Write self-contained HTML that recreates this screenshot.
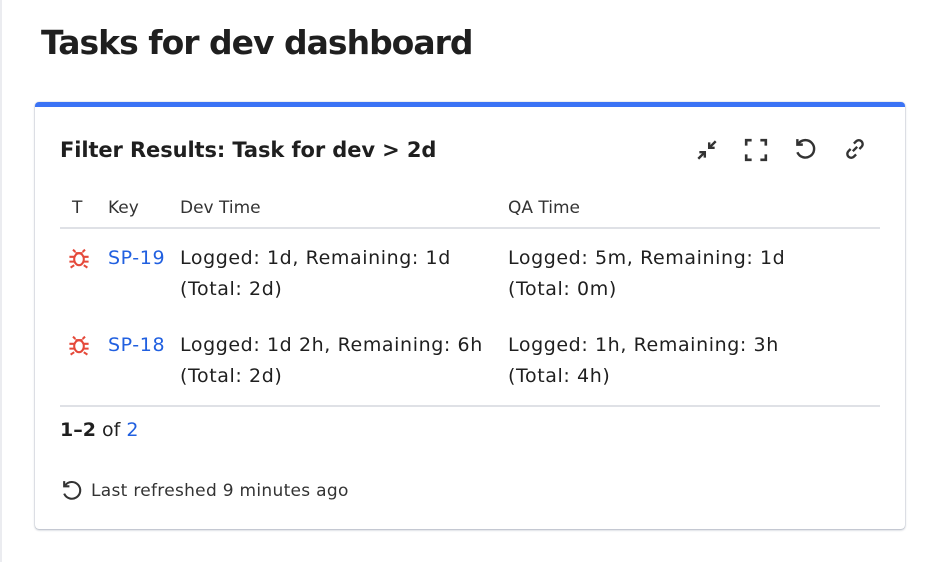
<!DOCTYPE html>
<html><head><meta charset="utf-8"><style>
body{margin:0;width:943px;height:562px;background:#fff;font-family:"DejaVu Sans","Liberation Sans",sans-serif;color:#1f1f1f;position:relative;overflow:hidden}
.lb{position:absolute;left:0;top:0;width:2px;height:562px;background:#ebecf0}
h1{position:absolute;left:41px;top:23px;margin:0;font-size:33px;font-weight:bold;color:#1f1f1f;letter-spacing:-1px}
.card{position:absolute;left:35px;top:102px;width:870px;height:427px;border-radius:4px;box-shadow:0 1px 2px rgba(9,30,66,.3),0 0 1px rgba(9,30,66,.3);overflow:hidden;background:#fff}
.bar{position:absolute;left:0;top:0;width:100%;height:5px;background:#3b73f5}
.t{position:absolute;white-space:nowrap}
.title{left:25px;top:36px;font-size:21px;font-weight:bold;letter-spacing:-0.1px}
.hd{top:96px;font-size:17px;color:#333}
.row{font-size:19px;line-height:31px;color:#1f1f1f;letter-spacing:0.6px}
.key{color:#2160e0}
.ln{position:absolute;left:25px;width:820px;height:2px;background:#dfe1e6}
svg{position:absolute}
</style></head><body>
<div class="lb"></div>
<h1>Tasks for dev dashboard</h1>
<div class="card">
<div class="bar"></div>
<div class="t title">Filter Results: Task for dev &gt; 2d</div>
<svg style="left:660px;top:36px" width="24" height="24" viewBox="0 0 22 22" fill="none" stroke="#333" stroke-width="2.2"><path d="M13 9l6-6M13 4v5h5M9 13l-6 6M4 13h5v5"/></svg>
<svg style="left:709px;top:36px" width="24" height="24" viewBox="0 0 22 22" fill="none" stroke="#333" stroke-width="2.4"><path d="M2 7V2h5M15 2h5v5M20 15v5h-5M7 20H2v-5"/></svg>
<svg style="left:758px;top:35px" width="24" height="24" viewBox="0 0 22 22" fill="none" stroke="#333" stroke-width="2.2"><path d="M5 6a8 8 0 1 1-1 8"/><path d="M4 2v5h5"/></svg>
<svg style="left:808px;top:35px" width="24" height="24" viewBox="0 0 22 22" fill="none" stroke="#333" stroke-width="2.2"><path d="M9 13l4-4M10 6l2-2a3.5 3.5 0 0 1 5 5l-2 2M12 16l-2 2a3.5 3.5 0 0 1-5-5l2-2"/></svg>
<div class="t hd" style="left:37px">T</div>
<div class="t hd" style="left:73px">Key</div>
<div class="t hd" style="left:145px">Dev Time</div>
<div class="t hd" style="left:473px">QA Time</div>
<div class="ln" style="top:125px"></div>
<svg style="left:32px;top:144px" width="24" height="24" viewBox="0 0 20 20" fill="none" stroke="#e5493a" stroke-width="1.7"><ellipse cx="10" cy="11" rx="4" ry="5"/><path d="M7 5l-2-2M13 5l2-2M6 9H2M14 9h4M6 13H2M14 13h4M6 16l-3 2M14 16l3 2M7 6h6"/></svg>
<div class="t row key" style="left:73px;top:141px">SP-19</div>
<div class="t row" style="left:145px;top:141px">Logged: 1d, Remaining: 1d<br>(Total: 2d)</div>
<div class="t row" style="left:473px;top:141px">Logged: 5m, Remaining: 1d<br>(Total: 0m)</div>
<svg style="left:32px;top:231px" width="24" height="24" viewBox="0 0 20 20" fill="none" stroke="#e5493a" stroke-width="1.7"><ellipse cx="10" cy="11" rx="4" ry="5"/><path d="M7 5l-2-2M13 5l2-2M6 9H2M14 9h4M6 13H2M14 13h4M6 16l-3 2M14 16l3 2M7 6h6"/></svg>
<div class="t row key" style="left:73px;top:228px">SP-18</div>
<div class="t row" style="left:145px;top:228px">Logged: 1d 2h, Remaining: 6h<br>(Total: 2d)</div>
<div class="t row" style="left:473px;top:228px">Logged: 1h, Remaining: 3h<br>(Total: 4h)</div>
<div class="ln" style="top:303px"></div>
<div class="t" style="left:25px;top:317px;font-size:19px"><b>1–2</b> of <span class="key">2</span></div>
<svg style="left:25px;top:377px" width="23" height="23" viewBox="0 0 22 22" fill="none" stroke="#333" stroke-width="2"><path d="M5 6a8 8 0 1 1-1 8"/><path d="M4 2v5h5"/></svg>
<div class="t" style="left:56px;top:379px;font-size:17px;color:#333;letter-spacing:0.3px">Last refreshed 9 minutes ago</div>
</div>
</body></html>
